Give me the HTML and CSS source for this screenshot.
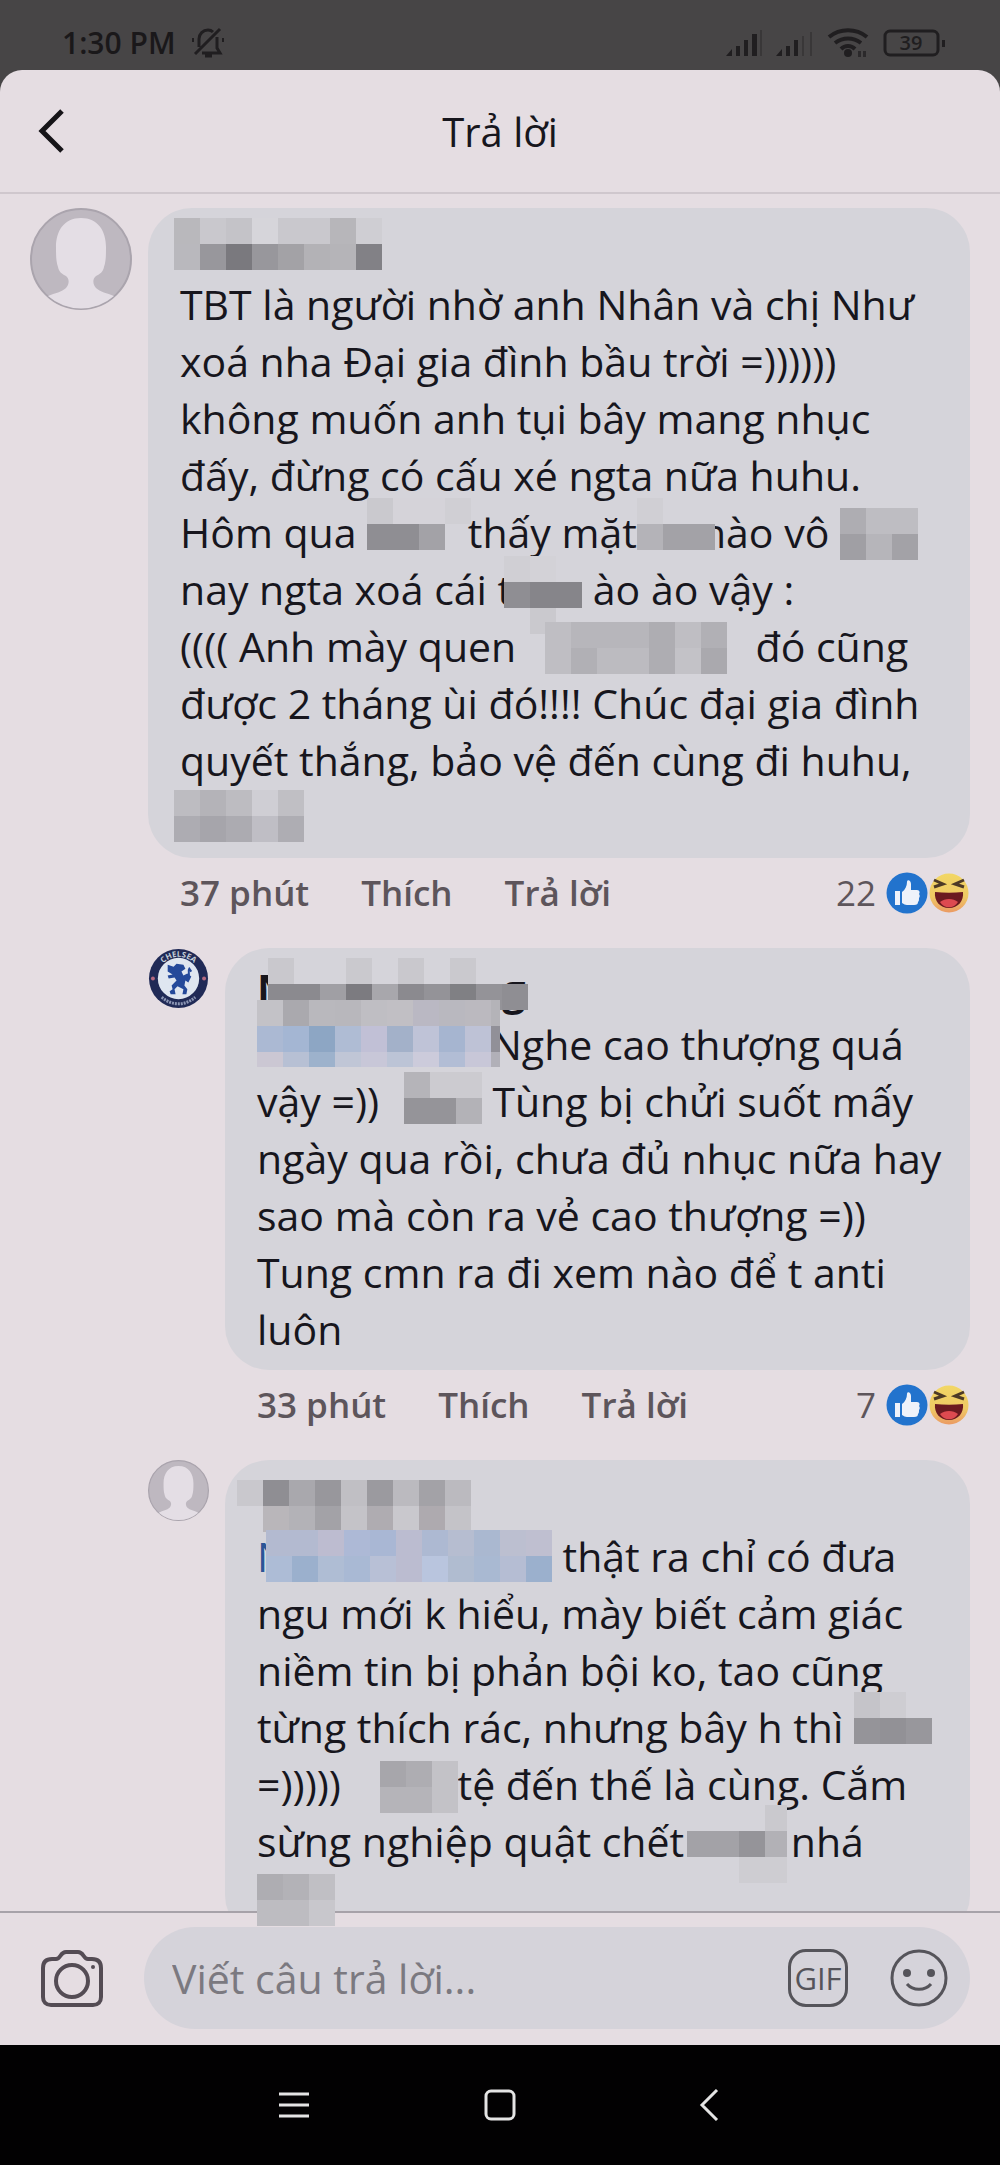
FILE: index.html
```html
<!DOCTYPE html>
<html lang="vi">
<head>
<meta charset="utf-8">
<meta name="viewport" content="width=device-width, initial-scale=1">
<title>Trả lời</title>
<link rel="stylesheet" href="styles.css">
</head>
<body>
<svg class="defs" width="0" height="0">
    <symbol id="person" viewBox="0 0 102 102">
        <circle cx="51" cy="51" r="50" fill="#beb8c0" stroke="#aaa4ad" stroke-width="2"/>
        <path d="M51 10c-17 0-25 13-25 29 0 8 0 14 2 20 1 5 4 7 8 9 4 3 3 9 0 12-4 4-11 5-18 8a50 50 0 0 0 66 0c-7-3-14-4-18-8-3-3-4-9 0-12 4-2 7-4 8-9 2-6 2-12 2-20 0-16-8-29-25-29z" fill="#e4dee5"/>
    </symbol>
    <symbol id="like" viewBox="0 0 42 42">
        <circle cx="21" cy="21" r="20.500" fill="#2273cd"/>
        <path d="M9 19h5v14H9zM16 20c3-2 5-6 5-10 0-3 4-2 4 2v6h6c3 0 3 3 2 4 1 1 1 3 0 4 0 2 0 3-1 4 0 2-1 3-4 3h-7c-2 0-3-1-5-2z" fill="#eef2fa"/>
    </symbol>
    <symbol id="haha" viewBox="0 0 40 42">
        <defs><linearGradient id="hg" x1="0" y1="0" x2="0" y2="1"><stop offset="0" stop-color="#f2d765"/><stop offset=".6" stop-color="#efc964"/><stop offset="1" stop-color="#eb9a63"/></linearGradient></defs>
        <circle cx="20" cy="21" r="19.500" fill="url(#hg)"/>
        <path d="M5 8l9 4-9 3M35 8l-9 4 9 3" fill="none" stroke="#4d3a26" stroke-width="3"/>
        <path d="M6 20c9 1 19 1 28 0 1 9-5 16-14 16S5 29 6 20z" fill="#6b1a20"/>
        <path d="M11 30c5-4 13-4 18 0-4 7-14 7-18 0z" fill="#dd4a50"/>
    </symbol>
</svg>

<div class="status">
    <span class="clock">1:30 PM</span>
    <svg class="mute" width="32" height="32" viewBox="0 0 32 32" fill="none" stroke="#201e20" stroke-width="3">
        <path d="M7 20V12c0-5 4-9 9-9 2 0 4 1 5 2M25 10v11l3 5H10M13 29h7M3 27L28 2"/>
        <path d="M1 11v4M31 11v4" stroke-width="2"/>
    </svg>
    <svg class="signals" width="220" height="32" viewBox="0 0 220 32">
        <g fill="#201e20">
            <path d="M0 29l6-7v7zM10 19h4v10h-4zM18 13h4v16h-4zM26 7h5v22h-5zM50 29l6-7v7zM60 19h4v10h-4zM68 13h4v16h-4z"/>
            <path d="M34 3h2v26h-2zM76 9h2v20h-2zM84 5h2v24h-2z" opacity=".35"/>
            <circle cx="122" cy="26" r="4"/>
            <path d="M216 13h3v7h-3z"/>
            <path d="M132 24h3v6h-3zM137 24h3v6h-3z" opacity=".7"/>
        </g>
        <g fill="none" stroke="#201e20" stroke-width="4">
            <path d="M103 10c11-9 27-9 38 0M109 16c8-6 18-6 26 0M115 22c4-4 10-4 14 0"/>
            <rect x="159" y="4" width="53" height="24" rx="5" stroke-width="3"/>
        </g>
        <text x="185" y="23" text-anchor="middle" class="charge">39</text>
    </svg>
</div>

<div class="sheet">
    <div class="header">
        <button class="back" aria-label="Quay lại">
            <svg width="30" height="46" viewBox="0 0 30 46"><path d="M25 3L5 23l20 20" fill="none" stroke="#161418" stroke-width="5"/></svg>
        </button>
        <h1>Trả lời</h1>
    </div>

    <div class="thread">
        <div class="comment">
            <svg class="avatar"><use href="#person"/></svg>
            <div class="main">
                <div class="bubble">
                    <div class="name"><svg class="mosaic pull" data-y="-3" data-cells="b9b8bc c9c8cd c4c3c8 d6d5da c9c8cd c9c8cd b7b6ba cfced3|b9b8bd 98979c 7a797e 98979c a3a2a6 b3b2b6 b5b4b8 828186"></svg></div>
                    <p>TBT là người nhờ anh Nhân và chị Như<br>
                    xoá nha Đại gia đình bầu trời =))))))<br>
                    không muốn anh tụi bây mang nhục<br>
                    đấy, đừng có cấu xé ngta nữa huhu.<br>
                    Hôm qua <svg class="mosaic tuck" data-y="-6" data-cells="cac9ce d5d3d9 d5d3d9 d0cfd4|8f8e93 8f8e93 a3a2a7 -"></svg> thấy mặt<svg class="mosaic tuck" data-y="-6" data-cells="d0cfd4 - -|b4b3b8 a3a2a7 a3a2a7"></svg>nào vô <svg class="mosaic" data-y="4" data-cells="aeadb2 bebdc2 bebdc2|a09fa4 b6b5ba a3a2a7"></svg><br>
                    nay ngta xoá cái t<svg class="mosaic clip" data-y="-5" data-cells="d0cfd4 d3d2d7 -|8f8e93 86858a 86858a|- cac9ce -"></svg> ào ào vậy :<br>
                    (((( Anh mày quen <svg class="mosaic spread" data-y="4" data-cells="bfbec3 b7b6bb b7b6bb b7b6bb aeadb2 bfbec3 b1b0b5|bfbec3 b1b0b5 bcbbc0 bcbbc0 aeadb2 c3c2c7 aaa9ae"></svg> đó cũng<br>
                    được 2 tháng ùi đó!!!! Chúc đại gia đình<br>
                    quyết thắng, bảo vệ đến cùng đi huhu,<br>
                    <svg class="mosaic pull" data-y="1" data-cells="bdbcc1 b4b3b8 bdbcc1 cfced4 c0bfc4|adacb2 a6a5ab acabb1 bfbec5 aeadb3"></svg></p>
                </div>
                <div class="actions">
                    <time>37 phút</time><button>Thích</button><button>Trả lời</button>
                    <span class="count">22</span><svg class="react"><use href="#like"/></svg><svg class="react"><use href="#haha"/></svg>
                </div>
            </div>
        </div>

        <div class="comment reply">
            <svg class="avatar" viewBox="0 0 62 62">
                <circle cx="31" cy="31" r="30" fill="#202a56"/>
                <circle cx="31" cy="31" r="21" fill="#dfe6f0"/>
                <path id="arc" d="M9 31a22 22 0 0 1 44 0" fill="none"/>
                <text class="club"><textPath href="#arc" startOffset="50%" text-anchor="middle">CHELSEA</textPath></text>
                <path d="M14 50c10 9 24 9 34 0" fill="none" stroke="#8c96b4" stroke-width="3" stroke-dasharray="2 1"/>
                <circle cx="5" cy="31" r="2" fill="#b56a80"/><circle cx="57" cy="31" r="2" fill="#b56a80"/>
                <path d="M20 17l6 2 3-3 7 1 2 4-4 3 2 4 4-2 4 3-3 6-3-2-1 5 3 4-1 5h-4l1-5-6-3-3 3 1 5h-5l-1-3 3-2-1-4 5-5-2-3-6 1-1-3 5-1-5-3z" fill="#24499a"/>
                <path d="M41 30c2-4-1-6 1-9l2 3" fill="none" stroke="#24499a" stroke-width="2"/>
            </svg>
            <div class="main">
                <div class="bubble">
                    <div class="name">N<svg class="mosaic cover tail" data-y="-3" data-cells="c9c8cd - - cac9ce - c9c8cd - cac9ce - -|8b8a8f 8b8a8f a09fa4 7c7b80 a8a7ac 8b8a8f 949398 808084 949398 8f8e93"></svg>g</div>
                    <p><svg class="mosaic tail" data-y="-16" data-cells="c3c2c7 aaa9ae b9b8bd b8b7bc bfbec3 c1bfc4 bab8c3 b9b8bf bbb9bf b4b3b8|abb9d3 a4b6d3 8da6c4 afbcd4 c1c0d6 a3b1c9 bfc3d7 a6b5d0 bec2d6 919098|cbc7d3 b7c0d4 9db2cc c0c6d6 c8c7d8 bcc4d6 cccbdb b2bdd5 c8c7d8 b1b0b8" data-last="15" data-end="9"></svg>Nghe cao thượng quá<br>
                    vậy =)) <svg class="mosaic after" data-y="-1" data-cells="b5b4b9 cccbd0 cccbd0|959499 959499 b3b2b7"></svg> Tùng bị chửi suốt mấy<br>
                    ngày qua rồi, chưa đủ nhục nữa hay<br>
                    sao mà còn ra vẻ cao thượng =))<br>
                    Tung cmn ra đi xem nào để t anti<br>
                    luôn</p>
                </div>
                <div class="actions">
                    <time>33 phút</time><button>Thích</button><button>Trả lời</button>
                    <span class="count">7</span><svg class="react"><use href="#like"/></svg><svg class="react"><use href="#haha"/></svg>
                </div>
            </div>
        </div>

        <div class="comment reply">
            <svg class="avatar"><use href="#person"/></svg>
            <div class="main">
                <div class="bubble">
                    <div class="name"><svg class="mosaic pull-far" data-y="7" data-cells="c9c8cd 8f8e93 a9a8ad 98979c c0bfc4 9b9a9f bbbabf a3a2a7 bbbabf|- b9b6ba b3b2b7 a3a2a7 c4c3c8 afacb1 c9c8cd aeaaaf c4c3c8"></svg></div>
                    <p><a href="#">N<svg class="mosaic cover" data-y="2" data-cells="b3bad0 b3bad0 bdbcd0 adb9d6 a9b7d4 bbbcd0 adb9d2 b6bdd0 aab8d0 bcbfd0 bfbfd0|adbcd6 9bb0cd afbdd4 a9b9d4 b8c0d6 bbbcd0 b9c5de b0bcd0 a9b9d2 b5bdd3 9bb0cd"></svg></a> thật ra chỉ có đưa<br>
                    ngu mới k hiểu, mày biết cảm giác<br>
                    niềm tin bị phản bội ko, tao cũng<br>
                    từng thích rác, nhưng bây h thì <svg class="mosaic" data-y="-7" data-cells="c5c4c9 cecdd2 -|959499 929196 98979c"></svg><br>
                    =))))) <svg class="mosaic far" data-y="5" data-cells="a7a6ab aeadb2 c3c2c7|b5b4b9 b5b4b9 c3c2c7"></svg>tệ đến thế là cùng. Cắm<br>
                    sừng nghiệp quật chết <svg class="mosaic clip" data-y="-8" data-cells="- - - cac9ce|a3a2a7 a3a2a7 959499 b2b1b6|- - cecdd2 cecdd2" data-end="22"></svg>nhá<br>
                    <svg class="mosaic" data-y="4" data-cells="aeadb2 b3b2b7 c0bfc4|bdbcc1 bdbcc1 c8c7cc"></svg></p>
                </div>
            </div>
        </div>
    </div>

    <form class="composer">
        <button type="button" class="camera" aria-label="Máy ảnh">
            <svg width="62" height="58" viewBox="0 0 62 58" fill="none" stroke="#544c54" stroke-width="4">
                <path d="M2 19c0-6 3-9 9-9h4c5 0 4-7 10-7h12c6 0 5 7 10 7h4c6 0 9 3 9 9v29c0 5-3 8-8 8H10c-5 0-8-3-8-8z"/>
                <circle cx="31" cy="32" r="16"/>
                <circle cx="52" cy="18" r="2" fill="#544c54" stroke="none"/>
            </svg>
        </button>
        <div class="field">
            <input type="text" aria-label="Viết câu trả lời" placeholder="Viết câu trả lời...">
            <button type="button" class="gif">GIF</button>
            <button type="button" aria-label="Biểu tượng cảm xúc">
                <svg width="58" height="58" viewBox="0 0 58 58" fill="none" stroke="#55545a" stroke-width="3">
                    <circle cx="29" cy="29" r="27"/>
                    <path d="M17 35c6 7 18 7 24 0"/>
                    <circle cx="17" cy="24" r="4" fill="#55545a" stroke="none"/><circle cx="41" cy="24" r="4" fill="#55545a" stroke="none"/>
                </svg>
            </button>
        </div>
    </form>
</div>

<div class="navbar">
    <button aria-label="Menu"><svg width="32" height="32" viewBox="0 0 32 32"><path d="M1 5h30M1 16h30M1 27h30" stroke="#e4e4e4" stroke-width="3"/></svg></button>
    <button aria-label="Home"><svg width="32" height="32" viewBox="0 0 32 32"><rect x="2" y="2" width="28" height="28" rx="5" fill="none" stroke="#e4e4e4" stroke-width="3"/></svg></button>
    <button aria-label="Back"><svg width="32" height="32" viewBox="0 0 32 32"><path d="M27 1L12 16l15 15" fill="none" stroke="#e4e4e4" stroke-width="3"/></svg></button>
</div>
<script src="mosaic.js"></script>
</body>
</html>
```
FILE: styles.css
```css
* {box-sizing:border-box;}
body {margin:0; height:100vh; display:flex; flex-direction:column; overflow:hidden; background:#474546; color:#17161d; font:41px/57px "Open Sans","Noto Sans",sans-serif;}
button {border:0; padding:0; background:none; color:inherit; font:inherit; display:flex; align-items:center; justify-content:center;}
svg {flex:none;}
p,h1 {margin:0;}
a {color:#2b5596; text-decoration:none;}
.defs {position:absolute;}

.status {height:70px; padding:16px 54px 0 62px; display:flex; align-items:center; color:#1a181a; font-size:30px; line-height:40px; font-weight:600;}
.mute {margin-left:16px;}
.signals {margin-left:auto;}
.charge {font-size:20px; fill:#201e20;}

.sheet {flex:1; min-height:0; display:flex; flex-direction:column; background:#e5dde2; border-radius:22px 22px 0 0;}
.header {flex:none; height:124px; border-bottom:2px solid #cfc7cd; display:grid; grid-template-columns:104px 1fr 104px; align-items:center;}
.header h1 {font-size:40px; font-weight:500; text-align:center;}

.thread {flex:1; min-height:0; padding:14px 30px 0;}
.comment {display:flex; gap:16px;}
.comment.reply {padding-left:118px;}
.avatar {width:102px; height:102px;}
.reply .avatar {width:61px; height:61px;}
.club {font-size:8px; line-height:8px; font-weight:700; fill:#c5cfd8;}
.main {flex:1; min-width:0;}
.bubble {padding:13px 0 12px 32px; background:#d5d4da; border-radius:44px; white-space:nowrap;}
.name {height:55px; font-weight:700;}
.actions {height:70px; margin-bottom:20px; padding-left:32px; display:flex; align-items:center; color:#5d555b; font-size:35px; line-height:40px; font-weight:600;}
.actions button {margin-left:52px;}
.count {margin-left:auto; margin-right:10px; font-weight:400;}
.react {width:42px; height:42px;}

/* pixelated names */
.mosaic {height:57px; vertical-align:top; overflow:visible; position:relative; z-index:2;}
.pull {margin-left:-6px;}
.pull-far {margin-left:-20px;}
.cover {margin-left:-22px;}
.clip {margin-left:-8px;}
.tail {margin-right:-26px;}
.tuck {margin-right:-14px;}
.spread {margin:0 18px;}
.after {margin-left:14px;}
.far {margin-left:28px;}

.composer {position:relative; z-index:1; flex:none; height:134px; padding:14px 30px 16px 0; display:flex; background:#e5dde2; border-top:2px solid #a7a2a9;}
.camera {width:144px;}
.field {flex:1; min-width:0; display:flex; align-items:center; gap:42px; padding:0 22px 0 28px; background:#d5d3da; border-radius:52px;}
.field input {flex:1; min-width:0; border:0; background:none; outline:0; padding:0; font:inherit; color:#17161d;}
.field input::placeholder {color:#7b7980; opacity:1;}
.gif {width:60px; height:58px; border:3px solid #55545a; border-radius:18px; color:#55545a; font-size:31px; font-weight:500;}

.navbar {flex:none; height:120px; background:#020102; display:flex; justify-content:center; align-items:center; gap:174px;}
```
FILE: mosaic.js
```js
// rows are split by "|", cells by a space, "-" leaves a hole
// data-last: height of the last row, data-end: width of the last column
var CELL = 26;
var list = document.querySelectorAll(".mosaic");
for (var i = 0; i < list.length; i++) {
    var svg = list[i];
    var top0 = parseInt(svg.getAttribute("data-y"));
    var last = parseInt(svg.getAttribute("data-last")) || CELL;
    var end = parseInt(svg.getAttribute("data-end")) || CELL;
    var rows = svg.getAttribute("data-cells").split("|");
    var cols = rows[0].split(" ").length;
    rows.forEach(function (row, r) {
        row.split(" ").forEach(function (c, n) {
            if (c == "-") return;
            var rect = document.createElementNS("http://www.w3.org/2000/svg", "rect");
            rect.setAttribute("x", n * CELL);
            rect.setAttribute("y", top0 + r * CELL);
            rect.setAttribute("width", n == cols - 1 ? end : CELL);
            rect.setAttribute("height", r == rows.length - 1 ? last : CELL);
            rect.setAttribute("fill", "#" + c);
            svg.appendChild(rect);
        });
    });
    svg.setAttribute("width", cols * CELL);
}
```
